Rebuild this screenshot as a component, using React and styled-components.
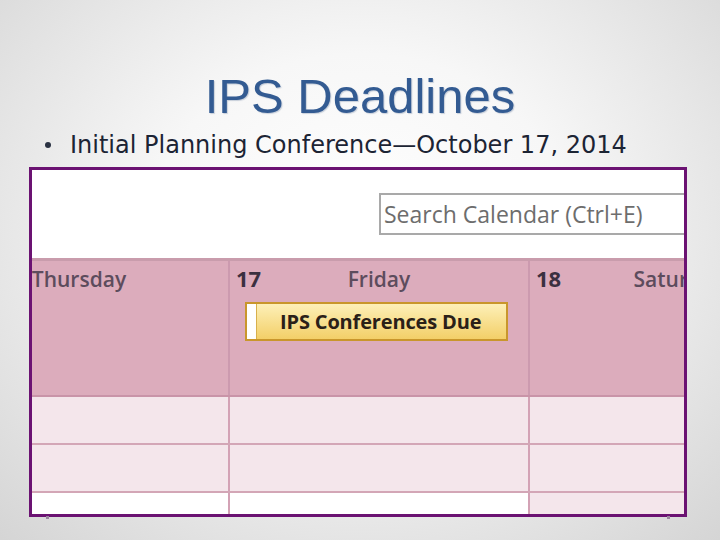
import styled, { createGlobalStyle } from "styled-components";

const GlobalStyle = createGlobalStyle`
  html, body {
    margin: 0;
    padding: 0;
  }
  body {
    width: 720px;
    height: 540px;
    overflow: hidden;
  }
`;

const Slide = styled.div`
  width: 720px;
  height: 540px;
  box-sizing: border-box;
  padding-top: 72px;
  display: flex;
  flex-direction: column;
  background: radial-gradient(
    ellipse 72% 80% at 50% 42%,
    #ffffff 0%,
    #f7f7f7 40%,
    #d5d5d5 100%
  );
`;

const Title = styled.h1`
  margin: 0;
  font-family: "Liberation Sans", Arial, sans-serif;
  font-weight: 400;
  font-size: 49px;
  line-height: 49px;
  color: #335b92;
  text-align: center;
  text-shadow: 1px 1px 1px rgba(140, 155, 180, 0.45);
`;

const Bullets = styled.ul`
  margin: 10px 0 0;
  padding: 0;
  list-style: none;
`;

const Item = styled.li`
  display: flex;
  align-items: center;
  padding-left: 45px;
  font-family: "DejaVu Sans", Verdana, sans-serif;
  font-size: 24px;
  line-height: 28px;
  color: #1c2434;
`;

const Dot = styled.span`
  width: 6px;
  height: 6px;
  border-radius: 50%;
  background: #2a3242;
  margin-right: 19px;
  flex-shrink: 0;
`;

const FrameWrap = styled.div`
  position: relative;
  margin: 8px 0 0 29px;
  width: 658px;
  height: 350px;
`;

const Frame = styled.div`
  width: 100%;
  height: 100%;
  box-sizing: border-box;
  border: 3px solid #6b1272;
  background: #fff;
  overflow: hidden;
  display: flex;
  flex-direction: column;
  font-family: "Open Sans", "Noto Sans", sans-serif;
`;

const Handle = styled.span`
  position: absolute;
  top: 349px;
  left: ${(p) => p.$x}px;
  width: 3px;
  height: 3px;
  background: #9c86a0;
`;

const Toolbar = styled.div`
  height: 91px;
  flex-shrink: 0;
  box-sizing: border-box;
  padding: 23px 0 0 347px;
  border-bottom: 3px solid #c99cac;
  background: #fff;
`;

const SearchBox = styled.div`
  width: 340px;
  height: 42px;
  box-sizing: border-box;
  border: 2px solid #a9a9a9;
  padding-left: 3px;
  display: flex;
  align-items: center;
  font-size: 23px;
  color: #6d6d6d;
  white-space: nowrap;
`;

const Grid = styled.div`
  width: 900px;
  margin-left: -102px;
  display: flex;
  flex-direction: column;
`;

const Row = styled.div`
  display: grid;
  grid-template-columns: 300px 300px 300px;
  height: ${(p) => p.$h}px;
  box-sizing: border-box;
  flex-shrink: 0;
  border-bottom: ${(p) => (p.$line ? `2px solid ${p.$line}` : "none")};
`;

const tones = {
  header: "#dcacbc",
  light: "#f4e6eb",
  white: "#ffffff",
};

const Cell = styled.div`
  background: ${(p) => tones[p.$tone]};
  box-sizing: border-box;
  border-right: 2px solid ${(p) => (p.$tone === "header" ? "#cc9aaf" : "#d3a2b5")};
  min-width: 0;
`;

const DayHeader = styled.div`
  display: grid;
  grid-template-columns: 1fr auto 1fr;
  align-items: baseline;
  height: 30px;
  padding: 2px 6px 0;
`;

const DateNum = styled.span`
  font-size: 22px;
  font-weight: 700;
  color: #3b3040;
`;

const DayName = styled.span`
  font-size: 21px;
  font-weight: 600;
  color: #5d4c5d;
`;

const EventChip = styled.div`
  margin: 9px 0 0 15px;
  width: 263px;
  height: 39px;
  box-sizing: border-box;
  border: 2px solid #c9962c;
  background: linear-gradient(#fdf0b8, #f3cf68);
  display: flex;
  align-items: stretch;
`;

const EventStrip = styled.span`
  width: 9px;
  background: #fff;
  border-right: 1px solid #d8b04c;
`;

const EventText = styled.span`
  align-self: center;
  margin-left: 23px;
  font-size: 20px;
  letter-spacing: -0.15px;
  font-weight: 700;
  color: #2a2018;
  white-space: nowrap;
`;

const days = [
  { date: "\u00a0", name: "Thursday" },
  { date: "17", name: "Friday", event: "IPS Conferences Due" },
  { date: "18", name: "Saturday" },
];

const rows = [
  { h: 48, tones: ["light", "light", "light"] },
  { h: 48, tones: ["light", "light", "light"] },
  { h: 21, tones: ["white", "white", "light"] },
];

export default function App() {
  return (
    <>
      <GlobalStyle />
      <Slide>
        <Title>IPS Deadlines</Title>
        <Bullets>
          <Item>
            <Dot />
            Initial Planning Conference—October 17, 2014
          </Item>
        </Bullets>
        <FrameWrap>
          <Frame>
            <Toolbar>
              <SearchBox>Search Calendar (Ctrl+E)</SearchBox>
            </Toolbar>
            <Grid>
              <Row $h={136} $line="#c994a8">
                {days.map((d) => (
                  <Cell key={d.name} $tone="header">
                    <DayHeader>
                      <DateNum>{d.date}</DateNum>
                      <DayName>{d.name}</DayName>
                      <span />
                    </DayHeader>
                    {d.event && (
                      <EventChip>
                        <EventStrip />
                        <EventText>{d.event}</EventText>
                      </EventChip>
                    )}
                  </Cell>
                ))}
              </Row>
              {rows.map((r, i) => (
                <Row key={i} $h={r.h} $line={i < rows.length - 1 ? "#d3a6b6" : null}>
                  {r.tones.map((t, j) => (
                    <Cell key={j} $tone={t} />
                  ))}
                </Row>
              ))}
            </Grid>
          </Frame>
          <Handle $x={17} />
          <Handle $x={638} />
        </FrameWrap>
      </Slide>
    </>
  );
}
